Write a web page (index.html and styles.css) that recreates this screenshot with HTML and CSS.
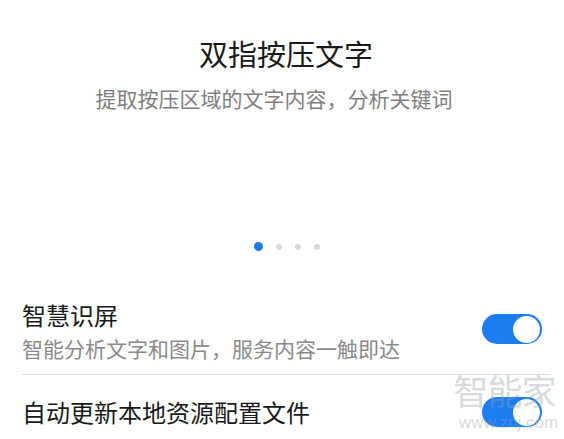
FILE: index.html
```html
<!DOCTYPE html>
<html lang="zh-CN">
<head>
  <meta charset="UTF-8" />
  <meta name="viewport" content="width=device-width, initial-scale=1.0" />
  <title>智慧识屏</title>
  <link rel="stylesheet" href="styles.css">
</head>
<body>
  <div class="intro">
    <h1>双指按压文字</h1>
    <p>提取按压区域的文字内容，分析关键词</p>
  </div>

  <div class="dots">
    <span class="dot active"></span>
    <span class="dot"></span>
    <span class="dot"></span>
    <span class="dot"></span>
  </div>

  <div class="setting first">
    <div class="text">
      <div class="name">智慧识屏</div>
      <div class="desc">智能分析文字和图片，服务内容一触即达</div>
    </div>
    <div class="switch on"><span class="knob"></span></div>
  </div>
  <div class="divider"></div>
  <div class="setting">
    <div class="text">
      <div class="name">自动更新本地资源配置文件</div>
    </div>
    <div class="switch on"><span class="knob"></span></div>
  </div>

  <div class="watermark">
    <div class="wm-logo">智能家</div>
    <div class="wm-url">www.znj.com</div>
  </div>
</body>
</html>
```

FILE: styles.css
```css
* {
  margin: 0;
  padding: 0;
  box-sizing: border-box;
}

body {
  font-family: "Noto Sans CJK SC", "Noto Sans", sans-serif;
  background: #fff;
  color: #1a1a1a;
  overflow: hidden;
  position: relative;
  height: 100vh;
}

.intro {
  padding-top: 33px;
  padding-left: 8px;
  text-align: center;
}

.intro h1 {
  font-size: 29px;
  font-weight: 400;
  line-height: 40px;
}

.intro p {
  margin-top: 10px;
  font-size: 21px;
  line-height: 30px;
  color: #7f7f7f;
  padding-right: 24px;
}

.dots {
  display: flex;
  justify-content: center;
  align-items: center;
  gap: 13px;
  margin-top: 129px;
  height: 9px;
  padding-left: 10px;
}

.dot {
  width: 6px;
  height: 6px;
  border-radius: 50%;
  background: #d9d9d9;
}

.dot.active {
  width: 9px;
  height: 9px;
  background: #1a7df2;
}

.setting {
  display: flex;
  align-items: center;
  justify-content: space-between;
  padding: 21px 22px 21px 22px;
}

.setting.first {
  margin-top: 26px;
  padding-top: 22px;
  padding-bottom: 11px;
}

.name {
  font-size: 24px;
  line-height: 32px;
  color: #1a1a1a;
}

.desc {
  margin-top: 2px;
  font-size: 21px;
  line-height: 30px;
  color: #8a8a8a;
}

.switch {
  width: 60px;
  height: 30px;
  border-radius: 15px;
  background: #d0d0d0;
  display: flex;
  align-items: center;
  padding: 2px;
}

.switch.on {
  background: #1a7df2;
  justify-content: flex-end;
}

.setting.first .switch {
  margin-top: -4px;
}

.knob {
  width: 27px;
  height: 27px;
  border-radius: 50%;
  background: #fff;
}

.divider {
  height: 1px;
  background: #dcdcdc;
  margin: 0 14px 0 22px;
}

/* watermark sits over the second row */
.watermark {
  position: absolute;
  left: 451px;
  top: 372px;
  text-align: center;
  color: rgba(150, 160, 172, 0.4);
  pointer-events: none;
}

.wm-logo {
  font-size: 35px;
  line-height: 36px;
  letter-spacing: -1px;
}

.wm-url {
  margin-top: 6px;
  font-family: "Liberation Sans", sans-serif;
  font-size: 17px;
  line-height: 18px;
  padding-left: 8px;
}
```
